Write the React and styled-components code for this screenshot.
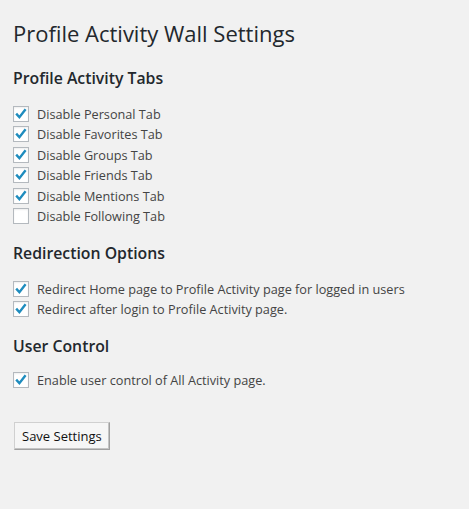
import React from "react";
import styled, { createGlobalStyle } from "styled-components";

const Global = createGlobalStyle`
  html, body { margin: 0; padding: 0; background: #f1f1f1; }
  body { font-family: "Open Sans", "Noto Sans", sans-serif; color: #444; }
`;

const Wrap = styled.div`
  padding: 20px 13px 40px 13px;
  min-height: 509px;
  box-sizing: border-box;
`;

const Title = styled.h1`
  margin: 0 0 21px;
  font-size: 22px;
  font-weight: 400;
  line-height: 27px;
  color: #23282d;
`;

const Heading = styled.h2`
  margin: ${(p) => p.$top || 0}px 0 ${(p) => p.$bottom ?? 18}px;
  font-size: 15.8px;
  font-weight: 600;
  line-height: 20px;
  color: #23282d;
`;

const List = styled.div`
  display: flex;
  flex-direction: column;
  gap: 4.4px;
`;

const Row = styled.label`
  display: flex;
  align-items: center;
  gap: 8px;
  font-size: 12.7px;
  line-height: 16px;
  height: 16px;
  color: #444;
`;

const Box = styled.span`
  width: 16px;
  height: 16px;
  box-sizing: border-box;
  border: 1px solid #b4b9be;
  background: #fff;
  box-shadow: inset 0 1px 2px rgba(0, 0, 0, 0.07);
  display: flex;
  align-items: center;
  justify-content: center;
  flex: none;
`;

const Button = styled.button`
  display: block;
  margin-top: 34px;
  margin-left: 1px;
  height: 28px;
  padding: 0 7px;
  font-family: inherit;
  font-size: 13px;
  color: #111;
  background: #f6f6f6;
  border: 1px solid #d0d0d0;
  border-right-color: #a0a0a0;
  border-bottom-color: #a0a0a0;
  box-shadow: inset -1px -1px 0 #c4c4c4;
  border-radius: 0;
`;

const Check = () => (
  <svg width="14" height="14" viewBox="0 0 14 14">
    <path d="M2.2 6.6 L5.4 10.2 L11.6 2.2" fill="none" stroke="#1e8cbe" strokeWidth="2.4" strokeLinejoin="miter" />
  </svg>
);

const Option = ({ checked, children }) => (
  <Row>
    <Box>{checked && <Check />}</Box>
    <span>{children}</span>
  </Row>
);

export default function App() {
  return (
    <>
      <Global />
      <Wrap>
        <Title>Profile Activity Wall Settings</Title>
        <Heading>Profile Activity Tabs</Heading>
        <List>
          <Option checked>Disable Personal Tab</Option>
          <Option checked>Disable Favorites Tab</Option>
          <Option checked>Disable Groups Tab</Option>
          <Option checked>Disable Friends Tab</Option>
          <Option checked>Disable Mentions Tab</Option>
          <Option>Disable Following Tab</Option>
        </List>
        <Heading $top={19}>Redirection Options</Heading>
        <List>
          <Option checked>Redirect Home page to Profile Activity page for logged in users</Option>
          <Option checked>Redirect after login to Profile Activity page.</Option>
        </List>
        <Heading $top={19} $bottom={16}>User Control</Heading>
        <List>
          <Option checked>Enable user control of All Activity page.</Option>
        </List>
        <Button>Save Settings</Button>
      </Wrap>
    </>
  );
}
